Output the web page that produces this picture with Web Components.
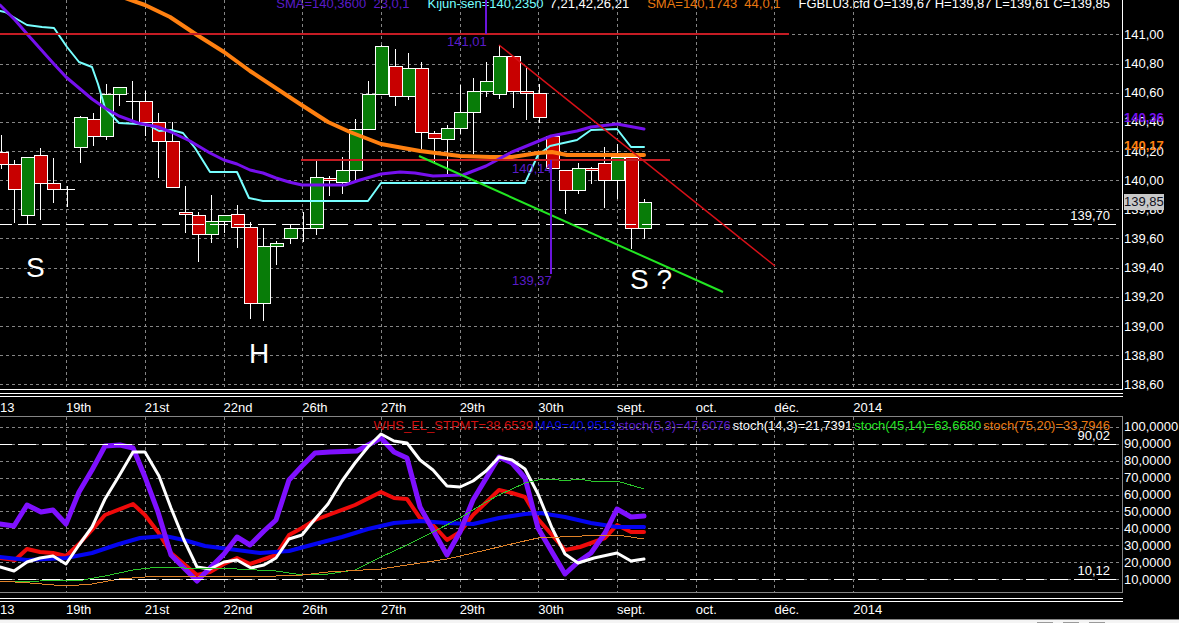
<!DOCTYPE html>
<html lang="fr">
<head>
<meta charset="utf-8">
<title>FGBLU3.cfd</title>
<style>
  body {
    margin: 0;
    background: #000;
    color: #fff;
    font: 13px/16px "Liberation Sans", Arial, sans-serif;
  }
</style>
</head>
<body>
<trading-chart></trading-chart>

<script>
const SESSION_X = [66, 145, 224, 302, 381, 460, 538, 617, 696, 774, 853];

const GRID_STYLES = `
  line, rect, polyline, path { fill: none; }
  .grid line { stroke: #858585; stroke-dasharray: 3 3; shape-rendering: crispEdges; }
  .level { stroke: #fff; stroke-dasharray: 18 6; shape-rendering: crispEdges; }
`;

function gridLines(rows, top, bottom) {
  const horizontal = rows.map((y) => `<line x1="0" x2="100%" y1="${y + 0.5}" y2="${y + 0.5}"/>`);
  const vertical = SESSION_X.map((x) => `<line x1="${x + 0.5}" x2="${x + 0.5}" y1="${top}" y2="${bottom}"/>`);
  return `<g class="grid">${horizontal.join("")}${vertical.join("")}</g>`;
}

function curve(points, color, width) {
  return `<polyline points="${points}" stroke="${color}" stroke-width="${width}" stroke-linejoin="round" stroke-linecap="round"/>`;
}

// first candle sits at x = 1, six candles per session
// [body top, body bottom, high, low, direction]
const CANDLES = [
  [152, 164, 135, 168, "d"],
  [164, 189, 160, 222, "d"],
  [157, 215, 157, 224, "u"],
  [155, 183, 148, 219, "d"],
  [183, 189, 158, 202, "d"],
  [189, 189, 186, 206, "d"],
  [117, 147, 116, 162, "u"],
  [119, 136, 113, 145, "d"],
  [94, 136, 84, 139, "u"],
  [87, 94, 87, 105, "u"],
  [101, 101, 81, 120, "d"],
  [101, 122, 91, 135, "d"],
  [122, 141, 113, 177, "d"],
  [141, 187, 122, 187, "d"],
  [212, 214, 186, 232, "d"],
  [215, 234, 212, 261, "d"],
  [221, 234, 195, 242, "u"],
  [215, 221, 215, 232, "u"],
  [214, 227, 205, 247, "d"],
  [227, 303, 222, 318, "d"],
  [246, 303, 228, 320, "u"],
  [243, 246, 241, 264, "u"],
  [228, 238, 225, 243, "u"],
  [228, 228, 212, 241, "d"],
  [177, 228, 161, 234, "u"],
  [178, 180, 176, 195, "d"],
  [170, 182, 157, 193, "u"],
  [129, 170, 119, 180, "u"],
  [94, 129, 81, 129, "u"],
  [46, 94, 45, 94, "u"],
  [66, 96, 49, 105, "d"],
  [68, 96, 53, 99, "u"],
  [68, 132, 62, 148, "d"],
  [133, 138, 131, 163, "d"],
  [128, 139, 125, 173, "u"],
  [112, 128, 85, 133, "u"],
  [91, 112, 78, 153, "u"],
  [81, 91, 62, 96, "u"],
  [56, 94, 46, 98, "u"],
  [56, 91, 56, 107, "d"],
  [91, 93, 68, 119, "d"],
  [93, 117, 84, 122, "d"],
  [136, 168, 136, 168, "d"],
  [170, 190, 170, 213, "d"],
  [168, 190, 163, 193, "u"],
  [168, 170, 167, 183, "d"],
  [163, 180, 147, 207, "d"],
  [157, 180, 144, 198, "u"],
  [157, 228, 157, 248, "d"],
  [202, 228, 199, 238, "u"],
];

function candles() {
  return CANDLES.map(([top, bottom, high, low, dir], i) => {
    const x = Math.round(1 + (i * 787) / 60);
    const wick = `<path d="M${x + 0.5} ${high}V${low + 1}"/>`;
    // open equals close: a flat bar instead of a body
    if (top === bottom) {
      return `${wick}<path d="M${x - 6} ${top + 0.5}h14"/>`;
    }
    return `${wick}<rect class="${dir}" x="${x - 5.5}" y="${top + 0.5}" width="13" height="${bottom - top}"/>`;
  }).join("");
}

class PricePlot extends HTMLElement {
  connectedCallback() {
    const kijun = "0,11 5,12 15,18 27,25 42,27 54,28 67,47 79,62 92,67 98,84 105,108 119,123 138,124 150,126 159,131 171,130 183,133 195,148 210,172 237,172 249,198 263,201 368,201 381,183 525,183 538,155 550,146 577,140 591,130 617,129 631,147 644,147";
    const sma23 = "0,5 15,20 28,35 53,63 66,77 79,88 92,99 105,108 119,116 138,123 158,127 171,132 190,141 210,153 224,160 237,164 250,170 263,173 276,178 289,182 302,185 325,185 345,185 360,180 381,174 400,172 415,173 433,176 463,175 486,166 512,152 551,136 577,131 591,127 617,124 644,129";
    const sma44 = "125,-2 145,5 170,17 197,35 224,52 250,71 300,104 328,122 350,132 381,144 420,151 460,156 490,157 512,157 538,153 552,152 567,155 644,155";
    this.attachShadow({ mode: "open" }).innerHTML = `
      <style>
        :host { display: block; }
        svg { display: block; width: 100%; height: 389px; }
        ${GRID_STYLES}
        .candles { stroke: #fff; shape-rendering: crispEdges; }
        .candles .u { fill: #087c08; }
        .candles .d { fill: #c80000; }
        .wave { fill: #5a1cc8; }
        .pattern { fill: #fff; font-size: 28px; }
      </style>
      <svg>
        ${gridLines([34, 64, 93, 122, 151, 180, 209, 238, 268, 297, 326, 355, 384], 0, 389)}
        <g class="candles">${candles()}</g>
        <line class="level" x1="-6" x2="1116" y1="224.5" y2="224.5"/>
        ${curve(kijun, "#7ff", 2)}
        ${curve(sma44, "#ff8010", 4)}
        ${curve(sma23, "#7610ee", 3)}
        <g stroke="#c41c24" stroke-width="2">
          <line x1="0" x2="789" y1="34" y2="34"/>
          <line x1="301" x2="670" y1="160" y2="160"/>
        </g>
        <line x1="499" y1="45" x2="775" y2="266" stroke="#d81018" stroke-width="1.5"/>
        <line x1="419" y1="156" x2="723" y2="292" stroke="#22e622" stroke-width="2"/>
        <g stroke="#6a14dc" stroke-width="2">
          <line x1="486" x2="486" y1="0" y2="34"/>
          <line x1="551" x2="551" y1="160" y2="274"/>
        </g>
        <text class="wave" x="447" y="46">141,01</text>
        <text class="wave" x="512" y="173">140,14</text>
        <text class="wave" x="512" y="285">139,37</text>
        <text class="pattern" x="26" y="277">S</text>
        <text class="pattern" x="249" y="363">H</text>
        <text class="pattern" x="630" y="289">S ?</text>
      </svg>
    `;
  }
}
customElements.define("price-plot", PricePlot);

class StochPlot extends HTMLElement {
  connectedCallback() {
    const strategy = "0,558 15,560 27,549 40,552 53,553 66,556 79,544 92,530 105,515 133,504 145,515 158,532 171,553 197,575 210,572 224,564 237,558 250,564 276,555 289,535 302,528 315,520 355,505 381,492 394,498 407,499 420,518 433,525 447,540 460,532 473,515 499,490 512,493 525,497 538,519 552,535 565,550 580,547 605,538 617,525 631,532 644,532";
    const average = "0,557 27,560 66,558 92,553 119,544 140,538 165,536 184,540 205,546 237,550 260,553 289,551 315,544 342,537 368,529 394,523 420,521 447,523 473,524 499,518 525,514 540,513 565,517 591,523 617,527 644,527";
    const stoch5 = "0,524 14,526 27,505 41,512 53,510 66,524 79,492 92,470 105,446 120,445 133,448 145,477 158,512 171,555 197,581 211,567 224,554 237,537 250,545 264,531 276,520 289,480 302,466 315,453 330,452 357,451 370,444 381,438 394,452 407,458 420,507 447,555 460,532 473,500 499,457 512,463 525,478 538,528 552,552 565,574 578,562 591,553 605,533 617,509 631,517 644,516";
    const stoch14 = "0,567 14,571 27,562 40,558 53,556 66,564 79,545 92,527 105,499 119,476 133,452 145,452 159,476 171,508 184,540 197,567 210,569 224,562 237,560 251,568 264,565 276,558 289,539 302,535 315,519 328,504 342,481 355,463 368,447 381,434 394,441 407,443 420,460 433,470 447,486 460,487 473,481 486,471 499,457 512,460 525,469 538,494 552,528 565,554 578,563 594,558 617,553 631,561 644,559";
    const stoch45 = "0,582 40,581 66,580 83,580 105,576 133,570 158,567 184,568 210,568 237,569 276,571 302,575 328,574 355,570 381,557 407,545 433,532 460,518 486,502 499,495 525,483 538,480 552,479 565,481 578,479 591,481 617,481 644,489";
    const stoch75 = "0,581 30,583 66,586 92,584 119,579 145,577 197,576 250,577 302,575 328,572 381,569 407,565 447,559 486,550 520,542 538,538 560,537 605,535 617,535 644,539";
    this.attachShadow({ mode: "open" }).innerHTML = `
      <style>
        :host { display: block; }
        svg { display: block; width: 100%; height: 175px; }
        ${GRID_STYLES}
      </style>
      <svg>
        <g transform="translate(0 -417)">
          ${gridLines([427, 444, 461, 478, 495, 511, 528, 545, 562, 579], 417, 592)}
          ${curve(strategy, "#f00a0a", 4)}
          ${curve(average, "#0505f0", 4)}
          ${curve(stoch5, "#7f10ff", 5)}
          ${curve(stoch14, "#fff", 3)}
          <g shape-rendering="crispEdges">
            ${curve(stoch45, "#2cc82c", 1)}
            ${curve(stoch75, "#e08228", 1)}
          </g>
          <line class="level" x1="-6" x2="1116" y1="444.5" y2="444.5"/>
          <line class="level" x1="-6" x2="1116" y1="579.5" y2="579.5"/>
        </g>
      </svg>
    `;
  }
}
customElements.define("stoch-plot", StochPlot);

// plot on the left, value scale on the right; slots: legend, plot, level, scale
class ChartPanel extends HTMLElement {
  connectedCallback() {
    this.attachShadow({ mode: "open" }).innerHTML = `
      <style>
        :host { display: grid; grid-template-columns: minmax(0, 1fr) 56px; }
        .plot {
          position: relative;
          overflow: hidden;
          border: 0 solid var(--frame, #fff);
          border-width: var(--frame-width, 0 1px 1px 0);
        }
        .plot ::slotted([slot="plot"]) { position: relative; }
      </style>
      <div class="plot">
        <slot name="legend"></slot>
        <slot name="plot"></slot>
        <slot name="level"></slot>
      </div>
      <slot name="scale"></slot>
    `;
  }
}
customElements.define("chart-panel", ChartPanel);

class ChartLegend extends HTMLElement {
  connectedCallback() {
    this.attachShadow({ mode: "open" }).innerHTML = `
      <style>
        :host {
          position: absolute;
          top: var(--top);
          right: 12px;
          display: flex;
          gap: var(--gap);
          white-space: pre;
        }
      </style>
      <slot></slot>
    `;
  }
}
customElements.define("chart-legend", ChartLegend);

class LevelLabel extends HTMLElement {
  connectedCallback() {
    this.attachShadow({ mode: "open" }).innerHTML = `
      <style>
        :host { position: absolute; right: 12px; top: ${this.getAttribute("top")}px; }
      </style>
      <slot></slot>
    `;
  }
}
customElements.define("level-label", LevelLabel);

class ValueScale extends HTMLElement {
  connectedCallback() {
    const values = this.getAttribute("values").split(" ");
    this.attachShadow({ mode: "open" }).innerHTML = `
      <style>
        :host {
          position: relative;
          display: flex;
          flex-direction: column;
          justify-content: space-between;
          padding-left: 1px;
        }
      </style>
      <slot></slot>
      ${values.map((value) => `<span>${value}</span>`).join("")}
    `;
  }
}
customElements.define("value-scale", ValueScale);

class PriceTag extends HTMLElement {
  connectedCallback() {
    this.attachShadow({ mode: "open" }).innerHTML = `
      <style>
        :host {
          position: absolute;
          left: 1px;
          top: ${this.getAttribute("top")}px;
          color: ${this.getAttribute("color")};
          font-weight: bold;
        }
        :host([last]) { z-index: 1; background: #c8c8c8; font-weight: normal; }
      </style>
      <slot></slot>
    `;
  }
}
customElements.define("price-tag", PriceTag);

class TimeScale extends HTMLElement {
  connectedCallback() {
    const labels = ["19th", "21st", "22nd", "26th", "27th", "29th", "30th", "sept.", "oct.", "déc.", "2014"];
    this.attachShadow({ mode: "open" }).innerHTML = `
      <style>
        :host { display: block; }
        .rule {
          height: 2px;
          margin-right: 56px;
          border: solid #fff;
          border-width: 1px 0;
        }
        .labels { display: flex; padding-top: var(--label-gap, 0); line-height: 16px; }
        .start { flex: 0 0 66px; }
        .sessions { flex: 0 0 866px; display: grid; grid-template-columns: repeat(11, 1fr); }
      </style>
      <div class="rule"></div>
      <div class="labels">
        <span class="start">13</span>
        <div class="sessions">${labels.map((label) => `<span>${label}</span>`).join("")}</div>
      </div>
    `;
  }
}
customElements.define("time-scale", TimeScale);

class TradingChart extends HTMLElement {
  connectedCallback() {
    this.attachShadow({ mode: "open" }).innerHTML = `
      <style>
        :host { display: flex; flex-direction: column; overflow: hidden; }
        .price chart-legend { --top: -4px; --gap: 18px; }
        .price value-scale { padding-top: 27px; margin-bottom: -3px; }
        .price + time-scale { margin-top: 3px; --label-gap: 3px; }
        .stoch { --frame: #858585; --frame-width: 1px 1px 1px 0; }
        .stoch chart-legend { --top: 1px; --gap: 2px; }
        .stoch value-scale { padding: 3px 0 5px 1px; }
        .stoch + time-scale { margin-top: 5px; }
        .violet { color: #5a1cc8; }
        .cyan { color: #7ff; }
        .orange { color: #e87810; }
        .red { color: #d01010; }
        .blue { color: #0808dc; }
        .green { color: #22e622; }
        .params { margin-left: -12px; }
        footer {
          display: flex;
          justify-content: flex-end;
          gap: 10px;
          height: 3px;
          margin-top: 1px;
          padding-right: 74px;
          border-top: 1px solid #858585;
          background: #f4f4f4;
        }
        footer i { width: 16px; height: 1px; margin-top: 2px; background: #9a9a9a; }
      </style>
      <chart-panel class="price">
        <chart-legend slot="legend">
          <span class="violet">SMA=140,3600  23,0,1</span>
          <span class="cyan">Kijun-sen=140,2350</span>
          <span class="params">7,21,42,26,21</span>
          <span class="orange">SMA=140,1743  44,0,1</span>
          <span>FGBLU3.cfd O=139,67 H=139,87 L=139,61 C=139,85</span>
        </chart-legend>
        <price-plot slot="plot"></price-plot>
        <level-label slot="level" top="208">139,70</level-label>
        <value-scale slot="scale" values="141,00 140,80 140,60 140,40 140,20 140,00 139,80 139,60 139,40 139,20 139,00 138,80 138,60">
          <price-tag top="110" color="#7610ee">140,36</price-tag>
          <price-tag top="138" color="#ff8010">140,17</price-tag>
          <price-tag top="194" color="#101020" last>139,85</price-tag>
        </value-scale>
      </chart-panel>
      <time-scale></time-scale>
      <chart-panel class="stoch">
        <chart-legend slot="legend">
          <span class="red">WHS_EL_STPMT=38,6539</span>
          <span class="blue">MA9=40,9513</span>
          <span class="violet">stoch(5,3)=47,6076</span>
          <span>stoch(14,3)=21,7391</span>
          <span class="green">stoch(45,14)=63,6680</span>
          <span class="orange">stoch(75,20)=33,7946</span>
        </chart-legend>
        <stoch-plot slot="plot"></stoch-plot>
        <level-label slot="level" top="11">90,02</level-label>
        <level-label slot="level" top="146">10,12</level-label>
        <value-scale slot="scale" values="100,0000 90,0000 80,0000 70,0000 60,0000 50,0000 40,0000 30,0000 20,0000 10,0000"></value-scale>
      </chart-panel>
      <time-scale></time-scale>
      <footer><i></i><i></i><i></i></footer>
    `;
  }
}
customElements.define("trading-chart", TradingChart);
</script>
</body>
</html>
